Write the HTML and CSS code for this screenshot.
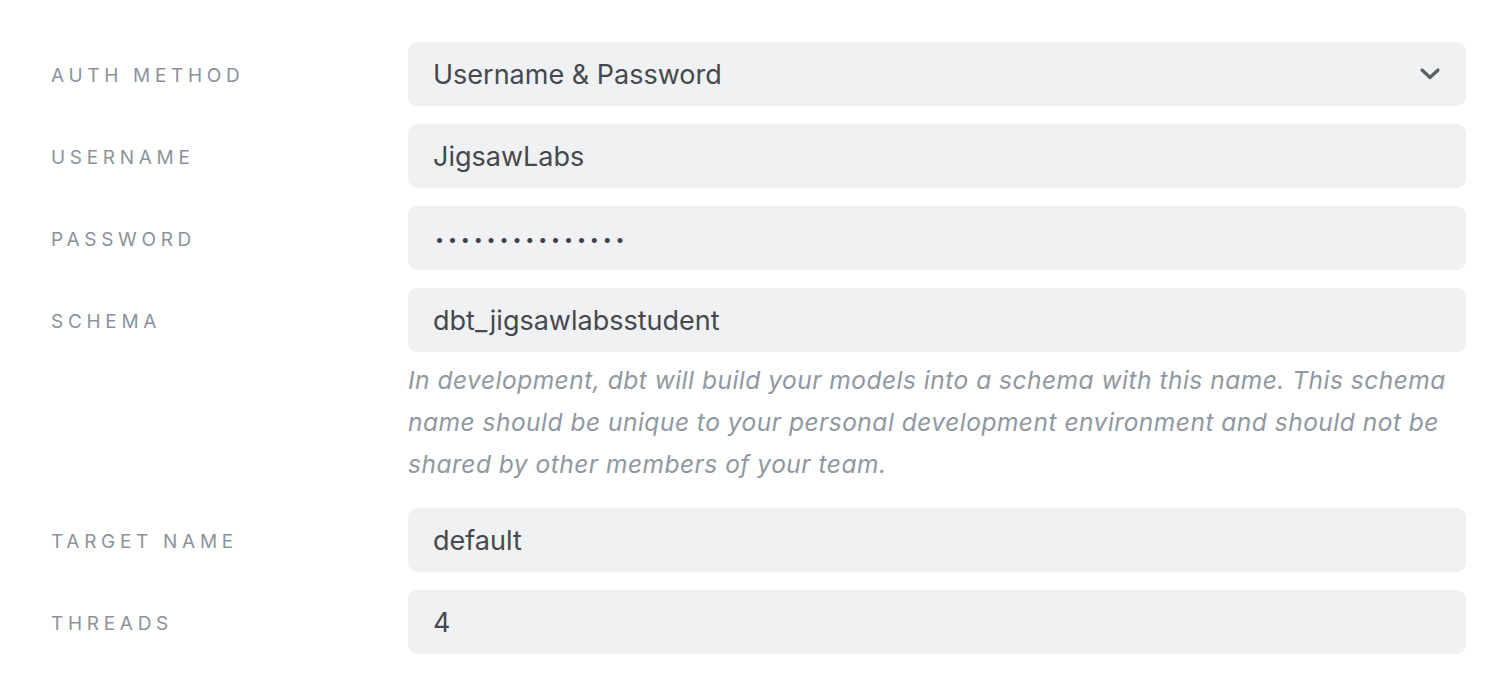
FILE: index.html
```html
<!DOCTYPE html>
<html>
<head>
<meta charset="utf-8">
<link rel="stylesheet" href="styles.css">
</head>
<body>
<div class="form">
  <div class="row">
    <div class="label">Auth Method</div>
    <div class="field select">
      <span class="value">Username &amp; Password</span>
      <svg class="chev" width="22" height="14" viewBox="0 0 22 14"><path d="M3 3 L11 10.5 L19 3" fill="none" stroke="#5b6068" stroke-width="3.2" stroke-linecap="round" stroke-linejoin="round"/></svg>
    </div>
  </div>
  <div class="row">
    <div class="label">Username</div>
    <div class="field"><span class="value">JigsawLabs</span></div>
  </div>
  <div class="row">
    <div class="label">Password</div>
    <div class="field"><span class="value dots">•••••••••••••••</span></div>
  </div>
  <div class="row">
    <div class="label">Schema</div>
    <div class="col">
      <div class="field"><span class="value">dbt_jigsawlabsstudent</span></div>
      <p class="help">In development, dbt will build your models into a schema with this name. This schema name should be unique to your personal development environment and should not be shared by other members of your team.</p>
    </div>
  </div>
  <div class="row">
    <div class="label">Target Name</div>
    <div class="field"><span class="value">default</span></div>
  </div>
  <div class="row">
    <div class="label">Threads</div>
    <div class="field"><span class="value">4</span></div>
  </div>
</div>
</body>
</html>
```

FILE: styles.css
```css
html, body {
  margin: 0;
  padding: 0;
  background: #ffffff;
}
body {
  font-family: Inter, "Noto Sans", "Liberation Sans", sans-serif;
}
.form {
  padding: 42px 38px 0 51px;
  display: flex;
  flex-direction: column;
  gap: 18px;
}
.row {
  display: grid;
  grid-template-columns: 357px 1fr;
  align-items: start;
}
.label {
  height: 64px;
  display: flex;
  align-items: center;
  padding-top: 2px;
  box-sizing: border-box;
  font-size: 19px;
  letter-spacing: 4.7px;
  text-transform: uppercase;
  color: #8a939c;
  font-weight: 400;
}
.col {
  display: flex;
  flex-direction: column;
}
.field {
  height: 64px;
  background: #f0f1f3;
  border-radius: 9px;
  display: flex;
  align-items: center;
  justify-content: space-between;
  padding: 0 25px;
  box-sizing: border-box;
}
.value {
  font-size: 27px;
  color: #45494f;
  padding-top: 1px;
}
.dots {
  font-size: 16px;
  letter-spacing: 3.9px;
  color: #3f4349;
  padding-left: 2px;
}
.help {
  margin: 7px 0 5px 0;
  font-size: 24.5px;
  line-height: 42px;
  font-style: italic;
  color: #8f98a1;
  letter-spacing: 0.5px;
}
```
